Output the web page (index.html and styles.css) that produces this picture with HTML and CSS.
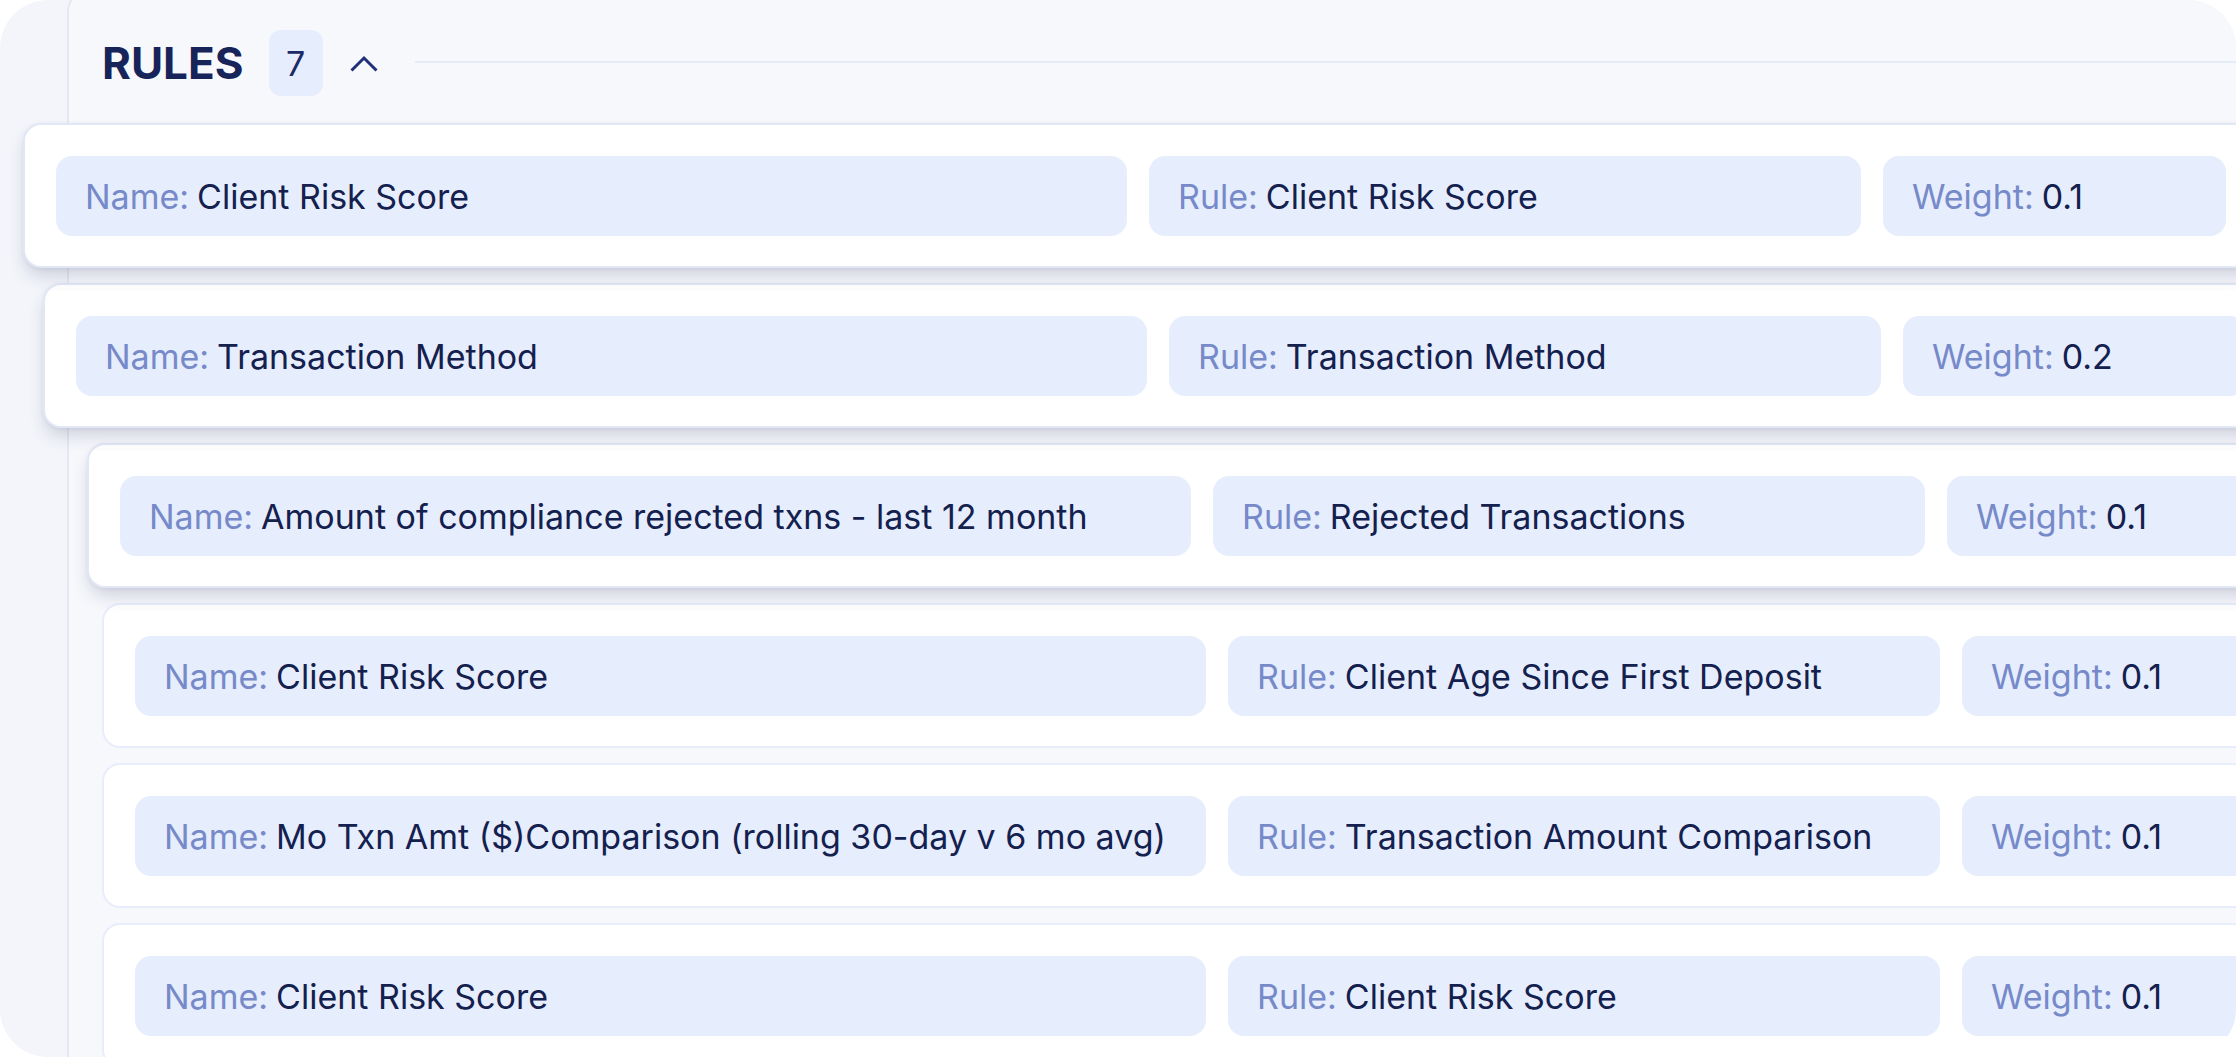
FILE: index.html
```html
<!DOCTYPE html>
<html lang="en">
  <head>
    <meta charset="UTF-8"/>
    <meta name="viewport" content="width=device-width, initial-scale=1.0">
    <link rel="stylesheet" href="styles.css">
    <title>Rules</title>
  </head>
  <body>
    <div class="outerPanel">
      <div class="rulesPanel">
        <div class="rulesHeader">
          <p class="rulesHeader_title">RULES</p>
          <span class="rulesHeader_count">7</span>
          <svg class="rulesHeader_toggle" viewBox="0 0 28 17" title="Collapse">
            <polyline points="1.5,15.5 14,3 26.5,15.5" fill="none" stroke="#22307a" stroke-width="3"/>
          </svg>
          <div class="rulesHeader_line"></div>
        </div>

        <div class="ruleList">
          <div class="ruleRow ruleRow_lifted ruleRow_first">
            <div class="ruleRow_field"><span class="ruleRow_label">Name:</span> <span class="ruleRow_value">Client Risk Score</span></div>
            <div class="ruleRow_field"><span class="ruleRow_label">Rule:</span> <span class="ruleRow_value">Client Risk Score</span></div>
            <div class="ruleRow_field"><span class="ruleRow_label">Weight:</span> <span class="ruleRow_value">0.1</span></div>
          </div>
          <div class="ruleRow ruleRow_lifted ruleRow_second">
            <div class="ruleRow_field"><span class="ruleRow_label">Name:</span> <span class="ruleRow_value">Transaction Method</span></div>
            <div class="ruleRow_field"><span class="ruleRow_label">Rule:</span> <span class="ruleRow_value">Transaction Method</span></div>
            <div class="ruleRow_field"><span class="ruleRow_label">Weight:</span> <span class="ruleRow_value">0.2</span></div>
          </div>
          <div class="ruleRow ruleRow_lifted ruleRow_third">
            <div class="ruleRow_field"><span class="ruleRow_label">Name:</span> <span class="ruleRow_value">Amount of compliance rejected txns - last 12 month</span></div>
            <div class="ruleRow_field"><span class="ruleRow_label">Rule:</span> <span class="ruleRow_value">Rejected Transactions</span></div>
            <div class="ruleRow_field"><span class="ruleRow_label">Weight:</span> <span class="ruleRow_value">0.1</span></div>
          </div>
          <div class="ruleRow">
            <div class="ruleRow_field"><span class="ruleRow_label">Name:</span> <span class="ruleRow_value">Client Risk Score</span></div>
            <div class="ruleRow_field"><span class="ruleRow_label">Rule:</span> <span class="ruleRow_value">Client Age Since First Deposit</span></div>
            <div class="ruleRow_field"><span class="ruleRow_label">Weight:</span> <span class="ruleRow_value">0.1</span></div>
          </div>
          <div class="ruleRow">
            <div class="ruleRow_field"><span class="ruleRow_label">Name:</span> <span class="ruleRow_value">Mo Txn Amt ($)Comparison (rolling 30-day v 6 mo avg)</span></div>
            <div class="ruleRow_field"><span class="ruleRow_label">Rule:</span> <span class="ruleRow_value">Transaction Amount Comparison</span></div>
            <div class="ruleRow_field"><span class="ruleRow_label">Weight:</span> <span class="ruleRow_value">0.1</span></div>
          </div>
          <div class="ruleRow">
            <div class="ruleRow_field"><span class="ruleRow_label">Name:</span> <span class="ruleRow_value">Client Risk Score</span></div>
            <div class="ruleRow_field"><span class="ruleRow_label">Rule:</span> <span class="ruleRow_value">Client Risk Score</span></div>
            <div class="ruleRow_field"><span class="ruleRow_label">Weight:</span> <span class="ruleRow_value">0.1</span></div>
          </div>
        </div>
      </div>
    </div>
  </body>
</html>
```

FILE: styles.css
```css
body {
  margin: 0;
  background-color: white;
  font-family: Inter, "Noto Sans", sans-serif;
}

.outerPanel {
  width: 2236px;
  height: 1057px;
  border-radius: 48px;
  background-color: rgb(243, 245, 250);
  overflow: hidden;
}
  .rulesPanel {
    box-sizing: border-box;
    height: calc(100% + 12px);
    margin: -12px 0 0 67px;
    padding: 40px 0 0 33px;
    background-color: rgb(247, 248, 252);
    border-left: 2px solid rgb(229, 232, 240);
    border-top: 2px solid rgb(229, 232, 240);
    border-top-left-radius: 24px;
  }

/* header */
.rulesHeader {
  display: flex;
  align-items: center;
  height: 66px;
  margin-bottom: 27px;
}
  .rulesHeader_title {
    margin: 0 25px 0 0;
    font-size: 44px;
    font-weight: 700;
    line-height: 1;
    color: rgb(23, 36, 89);
  }
  .rulesHeader_count {
    display: flex;
    justify-content: center;
    align-items: center;
    width: 54px;
    height: 66px;
    margin-right: 27px;
    border-radius: 12px;
    background-color: rgb(230, 237, 253);
    font-size: 34px;
    color: rgb(28, 42, 102);
  }
  .rulesHeader_toggle {
    width: 28px;
    height: 17px;
    margin-right: 37px;
    cursor: pointer;
  }
  .rulesHeader_line {
    flex: 1;
    height: 2px;
    margin-bottom: 3px;
    background-color: rgb(230, 235, 248);
  }

/* rows */
.ruleList {
  display: flex;
  flex-direction: column;
  gap: 15px;
}
  .ruleRow {
    box-sizing: border-box;
    flex-shrink: 0;
    width: 2236px;
    padding: 31px 31px 30px 31px;
    display: grid;
    grid-template-columns: 1071px 712px 343px;
    column-gap: 22px;
    background-color: white;
    border: 2px solid rgb(232, 237, 251);
    border-radius: 18px;
  }
  .ruleRow_lifted {
    position: relative;
    border-color: rgb(226, 231, 246);
    box-shadow: 0 10px 18px -3px rgba(33, 43, 96, 0.2), 0 1px 4px rgba(33, 43, 96, 0.06);
  }
  .ruleRow_first {
    margin-left: -79px;
    z-index: 3;
  }
  .ruleRow_second {
    margin-left: -59px;
    z-index: 2;
  }
  .ruleRow_third {
    margin-left: -15px;
    z-index: 1;
  }
    .ruleRow_field {
      display: flex;
      align-items: center;
      gap: 8px;
      height: 80px;
      padding: 0 29px;
      border-radius: 16px;
      background-color: rgb(230, 237, 253);
      font-size: 34px;
      white-space: nowrap;
      overflow: hidden;
    }
    .ruleRow_label {
      color: rgb(118, 137, 201);
      font-weight: 400;
    }
    .ruleRow_value {
      color: rgb(20, 32, 78);
      font-weight: 400;
    }
```
